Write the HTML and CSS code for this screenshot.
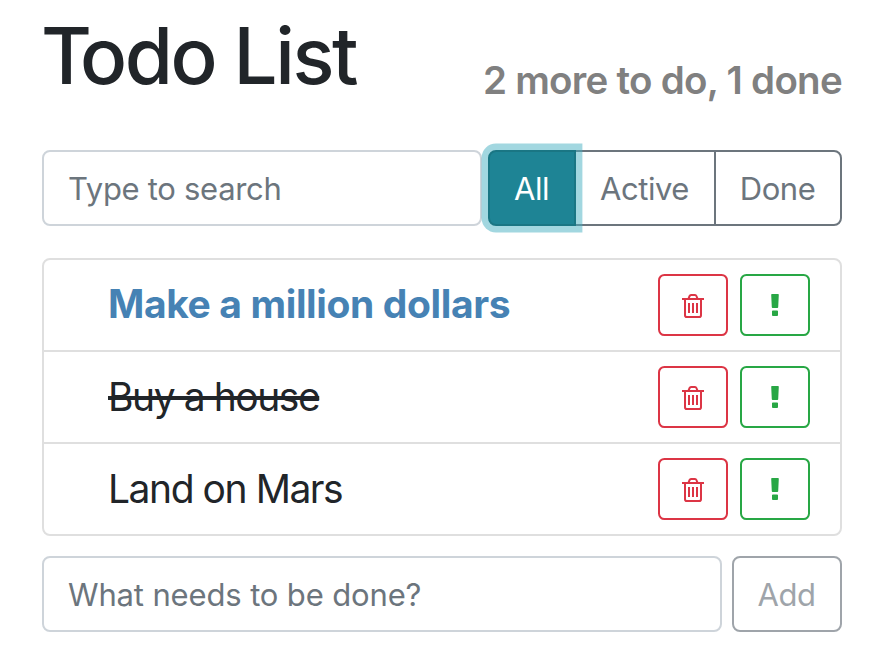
FILE: index.html
```html
<!DOCTYPE html>
<html lang="en">
<head>
<meta charset="utf-8">
<title>Todo List</title>
<link rel="stylesheet" href="styles.css">
</head>
<body>
<svg width="0" height="0" class="sprite" aria-hidden="true">
  <symbol id="trash" viewBox="0 0 22 24">
    <path d="M0 5H22M3 5V21.2Q3 23 4.8 23H17.2Q19 23 19 21.2V5M6.6 4.4L7.6 2Q8 1 9 1H13Q14 1 14.4 2L15.4 4.4M7 9V19M11 9V19M15 9V19" fill="none" stroke="currentColor" stroke-width="2"/>
  </symbol>
  <symbol id="exclamation" viewBox="0 0 8 22">
    <path d="M.9 0H7.1Q7.8 0 7.8.8L7.2 13.2Q7.1 14 6.4 14H1.6Q.9 14 .8 13.2L.2.8Q.2 0 .9 0ZM1.9 16.4H6.1Q7 16.4 7 17.3V21.1Q7 22 6.1 22H1.9Q1 22 1 21.1V17.3Q1 16.4 1.9 16.4Z" fill="currentColor"/>
  </symbol>
</svg>
<main class="todo-app">
  <header class="app-header">
    <h1><span class="initial">T</span>odo List</h1>
    <h2>2 more to do, 1 done</h2>
  </header>
  <div class="top-panel">
    <input class="field search" type="text" placeholder="Type to search">
    <div class="filters">
      <button class="btn filter active">All</button>
      <button class="btn filter middle">Active</button>
      <button class="btn filter last">Done</button>
    </div>
  </div>
  <ul class="todo-list">
    <li class="item important">
      <span class="label">Make a million dollars</span>
      <button class="btn action danger" aria-label="Delete"><svg class="trash"><use href="#trash"/></svg></button>
      <button class="btn action success" aria-label="Important"><svg class="exclamation"><use href="#exclamation"/></svg></button>
    </li>
    <li class="item done">
      <span class="label">Buy a house</span>
      <button class="btn action danger" aria-label="Delete"><svg class="trash"><use href="#trash"/></svg></button>
      <button class="btn action success" aria-label="Important"><svg class="exclamation"><use href="#exclamation"/></svg></button>
    </li>
    <li class="item">
      <span class="label">Land on Mars</span>
      <button class="btn action danger" aria-label="Delete"><svg class="trash"><use href="#trash"/></svg></button>
      <button class="btn action success" aria-label="Important"><svg class="exclamation"><use href="#exclamation"/></svg></button>
    </li>
  </ul>
  <form class="add-form">
    <input class="field new-item" type="text" placeholder="What needs to be done?">
    <button class="btn add" disabled>Add</button>
  </form>
</main>
</body>
</html>
```
FILE: styles.css
```css
* { box-sizing: border-box; }

body {
  margin: 0;
  background: #fff;
  color: #212529;
  font-family: Inter, "Liberation Sans", sans-serif;
}

.sprite { display: block; }

.todo-app {
  width: 800px;
  margin-left: 42px;
}

.app-header {
  display: flex;
  justify-content: space-between;
  align-items: flex-end;
  height: 108px;
}

h1, h2 { margin: 0; font-weight: 500; white-space: nowrap; }

h1 {
  margin-left: -1px;
  font-size: 78px;
  line-height: 96px;
  letter-spacing: -2.4px;
  padding-bottom: 4px;
}

.initial { letter-spacing: -12px; }

h2 {
  font-size: 38.5px;
  line-height: 48px;
  letter-spacing: -0.72px;
  padding-bottom: 4px;
  color: gray;
  font-weight: 600;
}

.top-panel {
  display: flex;
  gap: 6px;
  margin-top: 42px;
  height: 76px;
}

.field {
  height: 76px;
  min-width: 0;
  padding: 0 24px;
  border: 2px solid #ced4da;
  border-radius: 8px;
  background: #fff;
  font: 400 31px/48px Inter, "Liberation Sans", sans-serif;
  letter-spacing: -0.3px;
  outline: 0;
}

.field::placeholder { color: #6c757d; opacity: 1; }

.search { width: 440px; }

.filters { display: flex; }

.btn {
  display: flex;
  align-items: center;
  justify-content: center;
  padding: 0;
  background: transparent;
  border: 2px solid currentColor;
  border-radius: 8px;
  color: #6c757d;
  font: 400 31px/48px Inter, "Liberation Sans", sans-serif;
  letter-spacing: -0.45px;
}

.filter, .add { padding: 2px 1px 0 0; }

.filter.active {
  position: relative;
  z-index: 1;
  width: 88px;
  border-color: #1a7684;
  border-radius: 8px 0 0 8px;
  background: #1e8495;
  color: #fff;
  box-shadow: 0 0 0 6.4px rgba(69, 176, 194, .5);
}

.filter.middle {
  width: 142px;
  margin-left: -2px;
  border-radius: 0;
}

.filter.last {
  width: 128px;
  margin-left: -2px;
  border-radius: 0 8px 8px 0;
}

.todo-list {
  margin: 32px 0 0;
  padding: 0;
  list-style: none;
  border: 2px solid #dfdfdf;
  border-radius: 8px;
}

.item {
  display: flex;
  align-items: center;
  height: 92px;
  padding: 0 30px 0 64px;
  border-bottom: 2px solid #dfdfdf;
}

.item:last-child { height: 90px; border-bottom: 0; }

.label {
  margin-right: auto;
  font-size: 39px;
  font-weight: 400;
  line-height: 60px;
  letter-spacing: -1.45px;
  white-space: nowrap;
}

.important .label {
  padding-bottom: 2px;
  color: #4682b4;
  font-weight: 700;
  letter-spacing: -0.37px;
}

.done .label {
  text-decoration: line-through;
  text-decoration-thickness: 4px;
}

.action {
  width: 70px;
  height: 62px;
  margin-left: 12px;
  border-radius: 6.4px;
}

.danger { color: #dc3545; }
.success { color: #28a745; }

.trash { width: 22px; height: 24px; margin-top: 2px; }
.exclamation { width: 8px; height: 22px; }

.add-form {
  display: flex;
  gap: 10px;
  margin-top: 20px;
}

.new-item { width: 680px; letter-spacing: -0.14px; }

.add { width: 110px; opacity: .65; }
```
